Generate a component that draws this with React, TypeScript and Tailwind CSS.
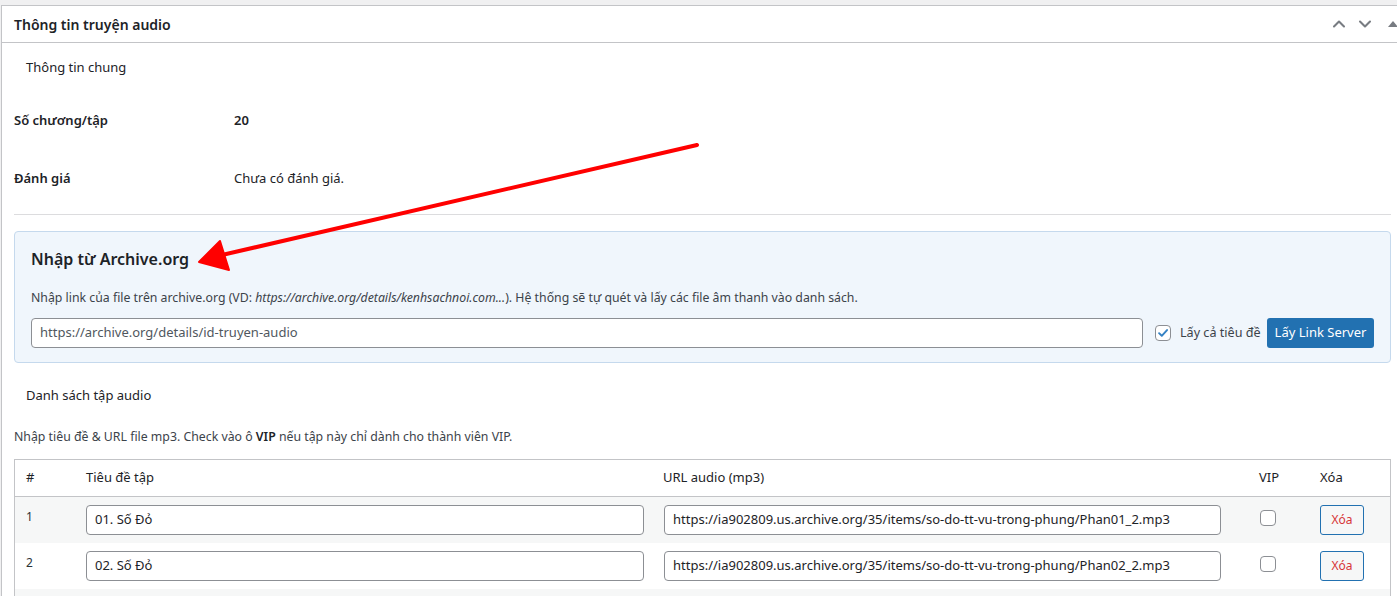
import { ChevronUp, ChevronDown } from 'lucide-react'

const rows = [
  { n: 1, title: '01. Số Đỏ', url: 'https://ia902809.us.archive.org/35/items/so-do-tt-vu-trong-phung/Phan01_2.mp3' },
  { n: 2, title: '02. Số Đỏ', url: 'https://ia902809.us.archive.org/35/items/so-do-tt-vu-trong-phung/Phan02_2.mp3' },
]

function Checkbox({ checked }: { checked?: boolean }) {
  return (
    <span className="flex h-4 w-4 shrink-0 items-center justify-center rounded-[4px] border border-[#8c8f94] bg-white">
      {checked && (
        <svg viewBox="0 0 16 16" className="h-[14px] w-[14px]">
          <path d="M3.5 8.2 6.6 11.2 12.6 4.6" fill="none" stroke="#3582c4" strokeWidth="2.2" strokeLinecap="round" strokeLinejoin="round" />
        </svg>
      )}
    </span>
  )
}

export default function App() {
  return (
    <div
      className="relative h-[596px] w-[1397px] overflow-hidden bg-[#f0f0f1] pt-[5px] text-[13px] text-[#1d2327]"
      style={{ fontFamily: '"Noto Sans", "Open Sans", sans-serif' }}
    >
      <div className="ml-px w-[1403px] border border-[#c3c4c7] bg-white">
        {/* postbox header */}
        <div className="flex h-[37px] items-center justify-between border-b border-[#c3c4c7] pl-[12px]">
          <h2 className="text-[14px] font-semibold">Thông tin truyện audio</h2>
          <div className="flex items-center text-[#787c82]">
            <ChevronUp className="h-5 w-5" strokeWidth={2.5} />
            <ChevronDown className="ml-[6px] h-5 w-5" strokeWidth={2.5} />
            <svg viewBox="0 0 20 20" className="ml-[8px] h-5 w-5">
              <path d="M5 13 10 7 15 13Z" fill="#787c82" />
            </svg>
          </div>
        </div>

        <div className="px-[12px]">
          <div className="flex h-[49px] items-center pl-[12px]">Thông tin chung</div>

          <div className="flex h-[58px] items-center">
            <div className="w-[220px] font-semibold">Số chương/tập</div>
            <div className="font-semibold">20</div>
          </div>
          <div className="flex h-[58px] items-center">
            <div className="w-[220px] font-semibold">Đánh giá</div>
            <div>Chưa có đánh giá.</div>
          </div>

          <div className="mt-[6px] w-[1377px] border-t border-[#dcdcde]" />

          {/* archive.org import */}
          <div className="mt-[16px] w-[1377px] rounded-[4px] border border-[#c5d9ed] bg-[#f0f6fc] px-[16px] pb-[14px] pt-[15px]">
            <h3 className="text-[16px] font-semibold leading-[24px]">Nhập từ Archive.org</h3>
            <p className="mt-[18px] text-[12.3px] leading-[18px] text-[#3c434a]">
              Nhập link của file trên archive.org (VD: <em>https://archive.org/details/kenhsachnoi.com...</em>). Hệ thống sẽ tự quét và lấy các file âm thanh vào danh sách.
            </p>
            <div className="mt-[11px] flex h-[30px] items-center">
              <div className="flex h-[30px] w-[1112px] items-center rounded-[4px] border border-[#8c8f94] bg-white px-[8px] text-[#50575e]">
                https://archive.org/details/id-truyen-audio
              </div>
              <div className="ml-[12px] flex items-center">
                <Checkbox checked />
                <span className="ml-[9px] text-[12.6px] text-[#3c434a]">Lấy cả tiêu đề</span>
              </div>
              <button className="ml-auto flex h-[30px] w-[107px] items-center justify-center rounded-[3px] bg-[#2271b1] text-white">
                Lấy Link Server
              </button>
            </div>
          </div>

          <div className="mt-[10px] flex h-[46px] items-center pl-[12px]">Danh sách tập audio</div>
          <div className="flex h-[40px] items-center pb-[4px] text-[12.3px] text-[#3c434a]">
            Nhập tiêu đề &amp; URL file mp3. Check vào ô&nbsp;<strong className="font-semibold text-[#1d2327]">VIP</strong>&nbsp;nếu tập này chỉ dành cho thành viên VIP.
          </div>

          {/* episodes table */}
          <div className="w-[1377px] border border-[#c3c4c7]">
            <div className="grid h-[37px] grid-cols-[61px_578px_595px_61px_1fr] items-center border-b border-[#c3c4c7] bg-white">
              <div className="pl-[11px]">#</div>
              <div className="pl-[10px]">Tiêu đề tập</div>
              <div className="pl-[9px]">URL audio (mp3)</div>
              <div className="pl-[10px]">VIP</div>
              <div className="pl-[10px]">Xóa</div>
            </div>
            {rows.map((r, i) => (
              <div
                key={r.n}
                className={`grid h-[46px] grid-cols-[61px_578px_595px_61px_1fr] items-start pt-[8px] ${i % 2 === 0 ? 'bg-[#f6f7f7]' : 'bg-white'}`}
              >
                <div className="pl-[11px] pt-[3px] text-[12px] text-[#2c3338]">{r.n}</div>
                <div className="pl-[10px]">
                  <div className="flex h-[30px] w-[558px] items-center rounded-[4px] border border-[#8c8f94] bg-white px-[8px]">{r.title}</div>
                </div>
                <div className="pl-[10px]">
                  <div className="flex h-[30px] w-[557px] items-center rounded-[4px] border border-[#8c8f94] bg-white px-[8px]">{r.url}</div>
                </div>
                <div className="pl-[11px] pt-[5px]">
                  <Checkbox />
                </div>
                <div className="pl-[10px]">
                  <button className="flex h-[30px] w-[44px] items-center justify-center rounded-[3px] border border-[#2271b1] bg-[#f6f7f7] text-[12px] text-[#d63638]">
                    Xóa
                  </button>
                </div>
              </div>
            ))}
            <div className="h-[46px] bg-[#f6f7f7]" />
          </div>
        </div>
      </div>

      {/* annotation arrow */}
      <svg className="pointer-events-none absolute left-0 top-0" width="1397" height="596">
        <line x1="697" y1="145" x2="222" y2="255" stroke="#ff0000" strokeWidth="4" strokeLinecap="round" />
        <path d="M199 262 L220 241 L229 270 Z" fill="#ff0000" stroke="#ff0000" strokeWidth="2" strokeLinejoin="round" />
      </svg>
    </div>
  )
}
